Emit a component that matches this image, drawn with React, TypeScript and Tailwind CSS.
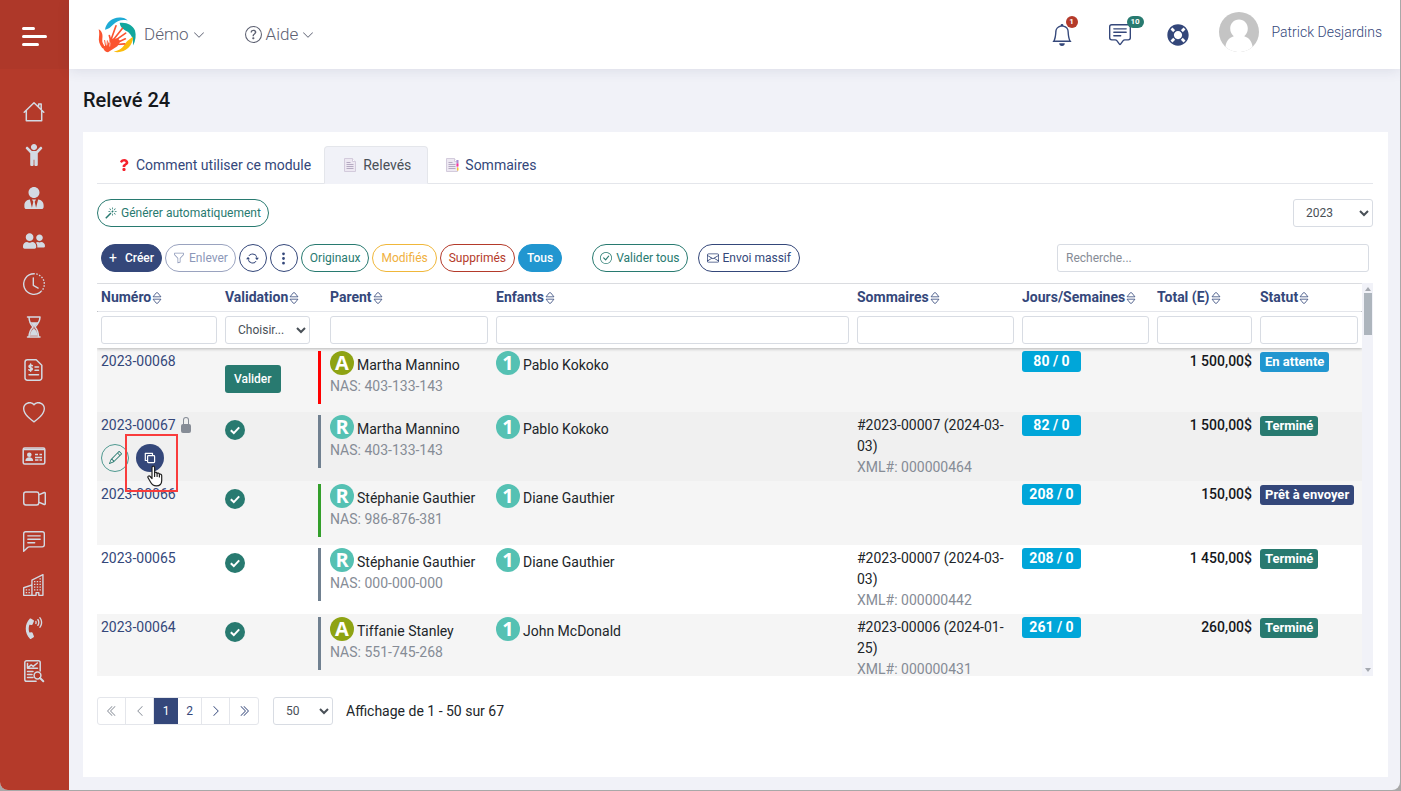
import { useState } from "react";
import type { ReactNode } from "react";
import clsx from "clsx";
import { FaChild, FaLifeRing, FaPhoneVolume, FaQuestion, FaUserFriends, FaUserTie } from "react-icons/fa";
import {
  BsArrowRepeat,
  BsBell,
  BsBuildings,
  BsCameraVideo,
  BsChatLeftText,
  BsChatSquareText,
  BsCheckCircle,
  BsChevronDoubleLeft,
  BsChevronDoubleRight,
  BsChevronDown,
  BsChevronLeft,
  BsChevronRight,
  BsClockHistory,
  BsEnvelope,
  BsFunnel,
  BsHeart,
  BsLockFill,
  BsMagic,
  BsPencil,
  BsQuestionCircle,
  BsThreeDotsVertical,
} from "react-icons/bs";

type Row = {
  id: string;
  validated: boolean;
  locked?: boolean;
  bar: string;
  letter: "A" | "R";
  parent: string;
  nas: string;
  child: string;
  summary?: string;
  xml?: string;
  days: string;
  total: string;
  status: "En attente" | "Terminé" | "Prêt à envoyer";
  bg: string;
};

const rows: Row[] = [
  { id: "2023-00068", validated: false, bar: "border-[#ff0000]", letter: "A", parent: "Martha Mannino", nas: "403-133-143", child: "Pablo Kokoko", days: "80 / 0", total: "1 500,00$", status: "En attente", bg: "bg-[#f5f5f5]" },
  { id: "2023-00067", validated: true, locked: true, bar: "border-[#708090]", letter: "R", parent: "Martha Mannino", nas: "403-133-143", child: "Pablo Kokoko", summary: "#2023-00007 (2024-03-03)", xml: "000000464", days: "82 / 0", total: "1 500,00$", status: "Terminé", bg: "bg-[#f0f0f0]" },
  { id: "2023-00066", validated: true, bar: "border-[#339f2b]", letter: "R", parent: "Stéphanie Gauthier", nas: "986-876-381", child: "Diane Gauthier", days: "208 / 0", total: "150,00$", status: "Prêt à envoyer", bg: "bg-[#f5f5f5]" },
  { id: "2023-00065", validated: true, bar: "border-[#708090]", letter: "R", parent: "Stéphanie Gauthier", nas: "000-000-000", child: "Diane Gauthier", summary: "#2023-00007 (2024-03-03)", xml: "000000442", days: "208 / 0", total: "1 450,00$", status: "Terminé", bg: "bg-white" },
  { id: "2023-00064", validated: true, bar: "border-[#708090]", letter: "A", parent: "Tiffanie Stanley", nas: "551-745-268", child: "John McDonald", summary: "#2023-00006 (2024-01-25)", xml: "000000431", days: "261 / 0", total: "260,00$", status: "Terminé", bg: "bg-[#f5f5f5]" },
];

const columns = [
  { label: "Numéro", width: "w-[124px]", pad: "px-1" },
  { label: "Validation", width: "w-[93px]", pad: "px-1" },
  { label: "Parent", width: "w-[178px]", pad: "pl-4 pr-1" },
  { label: "Enfants", width: "", pad: "px-1" },
  { label: "Sommaires", width: "w-[165px]", pad: "px-1" },
  { label: "Jours/Semaines", width: "w-[135px]", pad: "px-1" },
  { label: "Total (E)", width: "w-[103px]", pad: "px-1" },
  { label: "Statut", width: "w-[106px]", pad: "px-1" },
];

const statusColors = {
  "En attente": "bg-[#2196d0]",
  "Terminé": "bg-[#287a70]",
  "Prêt à envoyer": "bg-[#34477a]",
};

function HomeIcon() {
  return (
    <svg viewBox="0 0 22 22" className="size-[22px]" fill="none" stroke="currentColor" strokeWidth="1.5" strokeLinejoin="round" strokeLinecap="round">
      <path d="M1.2 11.2 11 1.8l9.8 9.4M3.3 9.6v10.2h15.4V9.6M15.6 5.6V3h2.6v5" />
    </svg>
  );
}

function HourglassIcon() {
  return (
    <svg viewBox="0 0 22 24" className="h-6 w-[22px]" fill="none" stroke="currentColor" strokeWidth="1.5" strokeLinecap="round" strokeLinejoin="round">
      <path d="M4.500 2h12.500M4.500 22h12.500M6 2.200c.2 4.300 1.300 7 4 9.800-2.700 2.800-3.800 5.500-4 9.800M17 2.200c-.2 4.300-2.300 7-5 9.800 2.700 2.800 3.300 5.500 3.500 9.800" />
      <path d="M7.500 7.500h7.500L11 12zM10.900 13.500c2.300 1.800 3.300 4 3.800 7H7c.4-3 1.600-5.200 3.900-7z" fill="currentColor" strokeWidth=".5" />
    </svg>
  );
}

function InvoiceIcon() {
  return (
    <svg viewBox="0 0 22 24" className="h-6 w-[22px]" fill="none" stroke="currentColor" strokeWidth="1.5" strokeLinecap="round" strokeLinejoin="round">
      <path d="M4.400 1.800h8.800l5.600 5.400v12.600a2.400 2.400 0 0 1-2.400 2.400H4.400A2.400 2.400 0 0 1 2 19.800V4.200a2.400 2.400 0 0 1 2.400-2.400z" />
      <path d="M9.300 7.600c-.6-.6-3.300-.8-3.300.8 0 1.700 3.400 1 3.400 2.700 0 1.500-2.700 1.600-3.500.6M7.600 5.900v7.400M12 9h3.500M12 12.300h3.500M6 16.800h9.500" />
    </svg>
  );
}

function IdCardIcon() {
  return (
    <svg viewBox="0 0 24 20" className="h-5 w-6" fill="none" stroke="currentColor" strokeWidth="1.5">
      <rect x="1.200" y="2" width="21.600" height="16" rx="1.500" />
      <path d="M1.500 3.500h21M13 8.500h3M17.500 8.500h2.500M13 11.500h7M13 14h3.500M17.500 14h2.500" />
      <circle cx="7.300" cy="8.800" r="2.300" fill="currentColor" stroke="none" />
      <path d="M3.400 15c0-2.600 1.700-3.800 3.900-3.800s3.900 1.200 3.900 3.800z" fill="currentColor" stroke="none" />
    </svg>
  );
}

function ReportIcon() {
  return (
    <svg viewBox="0 0 22 24" className="h-6 w-[22px]" fill="none" stroke="currentColor" strokeWidth="1.500" strokeLinecap="round" strokeLinejoin="round">
      <path d="M17.200 12V3.500a1.800 1.800 0 0 0-1.800-1.800H3.600a1.800 1.800 0 0 0-1.800 1.800v17a1.800 1.800 0 0 0 1.800 1.800h9.500" />
      <path d="M4.500 4.500v4.800h10M5.200 8.500l3-2.600 2 1.500 4.200-3.400M4.500 12.600h5.500M4.500 15.600h4.500M4.500 18.600h5.500" />
      <circle cx="14.500" cy="16.500" r="3.400" />
      <path d="m17 19 3.300 3.200" strokeWidth="2" />
    </svg>
  );
}

function CopyIcon() {
  return (
    <svg viewBox="0 0 12 12" className="size-3" fill="none" stroke="currentColor" strokeWidth="1.200" strokeLinejoin="round">
      <path d="M3.200 8.500H1.300V1.300h7.200v1.900" />
      <rect x="3.600" y="3.600" width="7" height="7" rx=".8" />
    </svg>
  );
}

function SortIcon() {
  return (
    <svg viewBox="0 0 10 14" className="h-[14px] w-[10px]" fill="none" stroke="currentColor" strokeWidth=".8" strokeLinejoin="round" strokeLinecap="round">
      <path d="M1.300 5.500 4.200 1.900q.8-.8 1.600 0l2.900 3.600zM1.300 8.500l2.900 3.600q.8.800 1.600 0l2.900-3.600z" />
    </svg>
  );
}

function PageIcon({ marked = false }: { marked?: boolean }) {
  return (
    <svg viewBox="0 0 14 16" className="h-4 w-[14px]">
      <path d="M1.500 1.500h8l3 3v10h-11z" fill="#ede8f2" stroke="#d3cbdc" />
      <path d="M9.500 1.500v3h3" fill="#fff" stroke="#d3cbdc" />
      <path d="M3.500 5.500h4M3.500 7.500h7M3.500 9.500h7M3.500 11.500h7" stroke="#b5aac2" />
      {marked && (
        <>
          <path d="M11.500 3v3.500h2V3z" fill="#a98cd0" />
          <path d="M11.500 6.500v3h2v-3z" fill="#f92f9d" />
          <path d="M12 10.500v3h1.500v-3z" fill="#fcc236" />
        </>
      )}
    </svg>
  );
}

function Logo() {
  return (
    <svg viewBox="295 46 120 110" className="h-[37px] w-10" fill="none">
      <path d="M319 87c3-24 27-41 52-36 7 1 12 4 16 8-17-4-32 0-44 13-6 6-14 14-24 15z" fill="#1fabd5" />
      <path d="M363 66c20-3 39 6 46 23 4 14 2 32-6 45 1-17-2-28-11-37-8-9-26-9-29-31z" fill="#12a79d" />
      <path d="M403 108c0 27-22 47-48 46l-10-2c14-2 24-8 31-18 8-12 12-16 27-26z" fill="#fbbc0c" />
      <path d="M300 85c11 6 13 18 11 29-1 10 1 18 8 26l-8 2c-9-12-12-22-10-34 1-8 1-14-1-23z" fill="#fb5430" />
      <g stroke="#fb5430" strokeLinecap="round">
        <path d="m337 117 15-42M344 117l27-34M351 118l30-21M358 124l22-10M337 123l-5-19" strokeWidth="5" />
        <path d="m354 131 24-2" strokeWidth="5" />
        <path d="m318 139-9-14M321 137l-3-18M325 137l1-17M329 138l5-12" strokeWidth="3" />
      </g>
      <path d="m334 114 24-1 7 8-9 15-28 18c-9 0-14-7-16-16l14-5z" fill="#fb5430" />
      <path d="m330 118 4 9-1 10" stroke="#fff" strokeWidth="2" />
    </svg>
  );
}

function HandCursor() {
  return (
    <svg viewBox="0 0 16 22" className="h-[22px] w-4" fill="#fff" stroke="#222" strokeWidth="1.200" strokeLinejoin="round" strokeLinecap="round">
      <path d="M5 13.500V2.700C5 .7 7.600.7 7.600 2.700v5.200c.5-1 2.500-.8 2.500.6.600-.8 2.300-.5 2.300.8.900-.5 2.300 0 2.300 1.500v4.600c0 3.500-1.500 5.400-5.400 5.400-2.800 0-4.200-.9-5.500-3.300L1.200 13c-1-1.700.8-2.800 2-1.500z" />
      <path d="M7.600 8v3.500M10.100 8.500v3M12.400 9.500v2.500" fill="none" />
    </svg>
  );
}

const navItems: { label: string; icon: ReactNode }[] = [
  { label: "Accueil", icon: <HomeIcon /> },
  { label: "Enfants", icon: <FaChild className="size-[22px]" /> },
  { label: "Employés", icon: <FaUserTie className="size-[22px]" /> },
  { label: "Parents", icon: <FaUserFriends className="size-[22px]" /> },
  { label: "Présences", icon: <BsClockHistory className="size-[22px]" /> },
  { label: "Attente", icon: <HourglassIcon /> },
  { label: "Factures", icon: <InvoiceIcon /> },
  { label: "Santé", icon: <BsHeart className="size-[22px]" /> },
  { label: "Contacts", icon: <IdCardIcon /> },
  { label: "Vidéos", icon: <BsCameraVideo className="size-[23px]" /> },
  { label: "Messages", icon: <BsChatLeftText className="size-[22px]" /> },
  { label: "Installations", icon: <BsBuildings className="size-[22px]" /> },
  { label: "Appels", icon: <FaPhoneVolume className="size-[22px]" /> },
  { label: "Rapports", icon: <ReportIcon /> },
];

function Sidebar() {
  return (
    <aside className="w-[69px] shrink-0 bg-[#b43a2a]">
      <button aria-label="Menu" className="flex h-[69px] w-full flex-col justify-center gap-[5px] bg-[#ae3829] pl-[22px] pt-[3px]">
        <span className="h-[3px] w-[13px] rounded-full bg-white" />
        <span className="h-[3px] w-[25px] rounded-full bg-white" />
        <span className="h-[3px] w-[17px] rounded-full bg-white" />
      </button>
      <nav className="pr-px pt-[21px]">
        {navItems.map((item) => (
          <a key={item.label} href="#" aria-label={item.label} className="flex h-[43px] items-center justify-center text-[#d3dae3]">
            {item.icon}
          </a>
        ))}
      </nav>
    </aside>
  );
}

function Header() {
  return (
    <header className="relative z-10 flex h-[69px] items-center bg-white pl-7 pr-[18px] shadow-[0_2px_12px_rgba(40,50,90,0.10)]">
      <Logo />
      <button className="ml-[7px] flex items-center gap-1 text-[17px] font-light text-[#5d6172]">
        Démo <BsChevronDown className="size-3" />
      </button>
      <button className="ml-10 flex items-center gap-1 text-[17px] font-light text-[#5d6172]">
        <BsQuestionCircle className="size-[17px]" /> Aide <BsChevronDown className="size-3" />
      </button>
      <div className="ml-auto flex items-center text-[#34477a]">
        <button aria-label="Notifications" className="relative">
          <BsBell className="size-[22px]" />
          <span className="absolute -top-2 left-[15px] flex h-3 min-w-3 items-center justify-center rounded-full bg-[#b43a2a] text-[8px] font-bold text-white">1</span>
        </button>
        <button aria-label="Messages" className="relative ml-9">
          <BsChatSquareText className="size-[22px]" />
          <span className="absolute -top-2 left-[18px] flex h-3 w-[17px] items-center justify-center rounded-full bg-[#287a70] text-[8px] font-bold text-white">10</span>
        </button>
        <button aria-label="Support" className="ml-9">
          <FaLifeRing className="size-[22px]" />
        </button>
        <a href="#" className="mb-1.5 ml-[30px] flex items-center gap-[13px] text-sm font-light">
          <svg viewBox="0 0 40 40" className="size-10">
            <circle cx="20" cy="20" r="20" fill="#c4c4c4" />
            <path d="M20 7.500c5.200 0 8.800 4 8.800 9 0 3.600-1.600 6-3.600 7.700 5 1.500 7.600 5 8.400 10.500a20 20 0 0 1-27.200 0c.8-5.500 3.400-9 8.400-10.500-2-1.700-3.600-4.100-3.600-7.700 0-5 3.600-9 8.800-9z" fill="#fff" />
          </svg>
          <span>Patrick Desjardins</span>
        </a>
      </div>
    </header>
  );
}

function Tabs() {
  const tab = "-mb-px flex h-[38px] items-center gap-1.5 rounded-t border text-sm";
  return (
    <nav className="flex border-b border-[#e4e6eb]">
      <a href="#" className={clsx(tab, "border-transparent pl-5 pr-3 text-[#34477a]")}>
        <FaQuestion className="size-3 text-[#f5222d]" />
        Comment utiliser ce module
      </a>
      <a href="#" className={clsx(tab, "border-[#e4e6eb] border-b-[#f1f2f8] bg-[#f1f2f8] pl-[18px] pr-4 text-[#495057]")}>
        <PageIcon /> Relevés
      </a>
      <a href="#" className={clsx(tab, "border-transparent pl-4 pr-4 text-[#34477a]")}>
        <PageIcon marked /> Sommaires
      </a>
    </nav>
  );
}

function Pill({ className, children, label }: { className: string; children: ReactNode; label?: string }) {
  return (
    <button aria-label={label} className={clsx("flex h-7 items-center justify-center rounded-full border text-xs", className)}>
      {children}
    </button>
  );
}

function Toolbar() {
  const [search, setSearch] = useState("");
  return (
    <div className="mt-[17px] flex items-center gap-[3px] pl-1 pr-1">
      <Pill className="gap-2 border-[#34477a] bg-[#34477a] px-[7px] font-medium text-white">
        <span className="text-sm font-normal leading-none">+</span> Créer
      </Pill>
      <Pill className="gap-1 border-[#9aa3bf] px-[7px] text-[#8c97b8]">
        <BsFunnel className="size-3" /> Enlever
      </Pill>
      <Pill label="Rafraîchir" className="w-7 border-[#34477a] text-[#34477a]">
        <BsArrowRepeat className="size-[13px]" />
      </Pill>
      <Pill label="Options" className="w-7 border-[#34477a] text-[#34477a]">
        <BsThreeDotsVertical className="size-[15px]" />
      </Pill>
      <Pill className="border-[#287a70] px-2 text-[#287a70]">Originaux</Pill>
      <Pill className="border-[#f0b73a] px-2 text-[#f0b040]">Modifiés</Pill>
      <Pill className="border-[#b43a2a] px-2 text-[#b43a2a]">Supprimés</Pill>
      <Pill className="border-[#2196d0] bg-[#2196d0] px-2 font-medium text-white">Tous</Pill>
      <Pill className="ml-[27px] gap-1 border-[#287a70] px-[7px] text-[#287a70]">
        <BsCheckCircle className="size-3" /> Valider tous
      </Pill>
      <Pill className="ml-[7px] gap-1 border-[#34477a] px-2 text-[#34477a]">
        <BsEnvelope className="size-3" /> Envoi massif
      </Pill>
      <input
        type="text"
        aria-label="Recherche"
        value={search}
        onChange={(e) => setSearch(e.target.value)}
        placeholder="Recherche..."
        className="ml-auto h-7 w-[312px] rounded-[3px] border border-[#d8dce3] px-2 text-xs placeholder:text-[#868c96]"
      />
    </div>
  );
}

function Avatar({ text, className }: { text: string; className: string }) {
  return (
    <span className={clsx("flex size-6 shrink-0 items-center justify-center rounded-full font-['Open_Sans',sans-serif] text-xl font-bold leading-none text-white", className)}>
      {text}
    </span>
  );
}

function RowActions() {
  return (
    <div className="relative mt-2 flex gap-[7px]">
      <button aria-label="Modifier" className="flex size-7 items-center justify-center rounded-full border border-[#4f9990] text-[#287a70]">
        <BsPencil className="size-[13px]" />
      </button>
      <button aria-label="Dupliquer" className="flex size-7 items-center justify-center rounded-full bg-[#34477a] text-white">
        <CopyIcon />
      </button>
      <div className="absolute -top-[10px] left-6 z-10 h-[58px] w-[53px] border-2 border-[#f93c3c]" />
      <div className="absolute left-[46px] top-[21px] z-10">
        <HandCursor />
      </div>
    </div>
  );
}

function RecordRow({ row }: { row: Row }) {
  return (
    <tr className={clsx("h-16 align-top", row.bg)}>
      <td className="px-1 py-[3px]">
        <div className="flex items-center gap-0.5">
          <a href="#" className="text-[#34477a]">{row.id}</a>
          {row.locked && <BsLockFill className="size-4 text-[#868c96]" />}
        </div>
        {row.locked && <RowActions />}
      </td>
      <td className="px-1">
        {row.validated ? (
          <svg viewBox="0 0 20 20" className="mt-2 size-5">
            <circle cx="10" cy="10" r="10" fill="#287a70" />
            <path d="m5.800 10.300 3 2.800 5.400-5.700" fill="none" stroke="#fff" strokeWidth="2" />
          </svg>
        ) : (
          <button className="mt-[17px] h-7 rounded-[3px] bg-[#287a70] px-[9px] text-xs font-medium text-white">Valider</button>
        )}
      </td>
      <td className="px-1 py-[3px]">
        <div className={clsx("h-[53px] border-l-[3px] pl-[9px]", row.bar)}>
          <div className="flex gap-[3px]">
            <Avatar text={row.letter} className={row.letter === "A" ? "bg-[#8ea313]" : "bg-[#55c1b3]"} />
            <span className="whitespace-nowrap pt-1">{row.parent}</span>
          </div>
          <div className="text-[#868c96]">NAS: {row.nas}</div>
        </div>
      </td>
      <td className="px-1 py-[3px]">
        <div className="flex gap-[3px]">
          <Avatar text="1" className="bg-[#55c1b3]" />
          <span className="pt-1">{row.child}</span>
        </div>
      </td>
      <td className="px-1 py-[3px]">
        {row.summary}
        {row.xml && <div className="text-[#868c96]">XML#: {row.xml}</div>}
      </td>
      <td className="px-1 py-[3px]">
        <div className="h-[21px] w-[59px] rounded-[3px] bg-[#00a6d9] text-center font-bold text-white">{row.days}</div>
      </td>
      <td className="px-1 py-[3px] text-right font-medium text-[#15181c]">{row.total}</td>
      <td className="px-1 py-1">
        <span className={clsx("block h-5 w-fit whitespace-nowrap rounded-[3px] px-[5px] text-[13px] font-bold leading-5 text-white", statusColors[row.status])}>
          {row.status}
        </span>
      </td>
    </tr>
  );
}

function RecordsTable() {
  return (
    <div className="mt-[11px] flex h-[393px] overflow-hidden">
      <div className="min-w-0 flex-1 overflow-hidden">
        <table className="w-full table-fixed border-collapse text-sm leading-[21px] text-[#212529]">
          <thead className="relative bg-white shadow-[0_1px_3px_rgba(0,0,0,0.25)]">
            <tr className="h-7 border-y border-[#e4e6eb]">
              {columns.map((col) => (
                <th key={col.label} scope="col" className={clsx("text-left font-bold text-[#34477a]", col.width, col.pad)}>
                  <span className="flex items-center gap-px whitespace-nowrap">
                    {col.label} <SortIcon />
                  </span>
                </th>
              ))}
            </tr>
            <tr className="h-9">
              {columns.map((col) => (
                <td key={col.label} className={col.pad}>
                  {col.label === "Validation" ? (
                    <select aria-label="Filtrer Validation" className="block h-7 w-full rounded-[3px] border border-[#d8dce3] bg-white pl-2 text-xs text-[#495057]">
                      <option>Choisir...</option>
                    </select>
                  ) : (
                    <input type="text" aria-label={`Filtrer ${col.label}`} className="block h-7 w-full rounded-[3px] border border-[#d8dce3] bg-white px-2 text-xs" />
                  )}
                </td>
              ))}
            </tr>
          </thead>
          <tbody>
            {rows.map((row) => (
              <RecordRow key={row.id} row={row} />
            ))}
          </tbody>
        </table>
      </div>
      {/* scrollbar */}
      <div className="flex w-[11px] flex-col items-center bg-[#f1f2f8] py-1">
        <svg viewBox="0 0 6 4" className="h-1 w-1.5 fill-[#a5a9b0]"><path d="M3 0 6 4H0z" /></svg>
        <div className="mt-0.5 h-[42px] w-2 bg-[#adb5bd]" />
        <svg viewBox="0 0 6 4" className="mt-auto h-1 w-1.5 fill-[#a5a9b0]"><path d="M0 0h6L3 4z" /></svg>
      </div>
    </div>
  );
}

function Pagination() {
  const cell = "flex items-center justify-center border-r border-[#e4e6eb] last:border-r-0";
  return (
    <div className="mt-[21px] flex items-center">
      <div className="flex h-7 overflow-hidden rounded-[3px] border border-[#e4e6eb] text-xs text-[#34477a]">
        <button aria-label="Première page" className={clsx(cell, "w-7 text-[#868c96]")}><BsChevronDoubleLeft className="size-3" /></button>
        <button aria-label="Page précédente" className={clsx(cell, "w-7 text-[#868c96]")}><BsChevronLeft className="size-3" /></button>
        <button className="w-6 bg-[#34477a] text-white">1</button>
        <button className={clsx(cell, "w-6")}>2</button>
        <button aria-label="Page suivante" className={clsx(cell, "w-7")}><BsChevronRight className="size-3" /></button>
        <button aria-label="Dernière page" className={clsx(cell, "w-7")}><BsChevronDoubleRight className="size-3" /></button>
      </div>
      <select aria-label="Lignes par page" className="ml-[14px] h-7 w-[60px] rounded-[3px] border border-[#d8dce3] bg-white pl-2 text-xs text-[#495057]">
        <option>50</option>
      </select>
      <span className="ml-[13px] text-sm text-[#212529]">Affichage de 1 - 50 sur 67</span>
    </div>
  );
}

export default function App() {
  return (
    <div className="flex min-h-screen bg-[#a8a8a8] pb-px pr-px font-[Roboto,sans-serif]">
      <div className="flex flex-1 overflow-hidden rounded-b-lg bg-[#f1f2f8]">
        <Sidebar />
        <div className="flex min-w-0 flex-1 flex-col">
          <Header />
          <main className="flex flex-1 flex-col pb-[13px] pl-[14px] pr-3 pt-4">
            <h1 className="text-xl font-medium leading-[30px] text-[#15181c]">Relevé 24</h1>
            <section className="mt-[17px] flex-1 bg-white pl-[14px] pr-[15px] pt-[14px]">
              <Tabs />
              <div className="mt-[15px] flex items-center justify-between">
                <Pill className="gap-1 border-[#287a70] px-[7px] text-[#287a70]">
                  <BsMagic className="size-3" /> Générer automatiquement
                </Pill>
                <select aria-label="Année" className="h-7 w-20 rounded-[3px] border border-[#d8dce3] bg-white pl-2 text-xs text-[#495057]">
                  <option>2023</option>
                </select>
              </div>
              <Toolbar />
              <RecordsTable />
              <Pagination />
            </section>
          </main>
        </div>
      </div>
    </div>
  );
}
